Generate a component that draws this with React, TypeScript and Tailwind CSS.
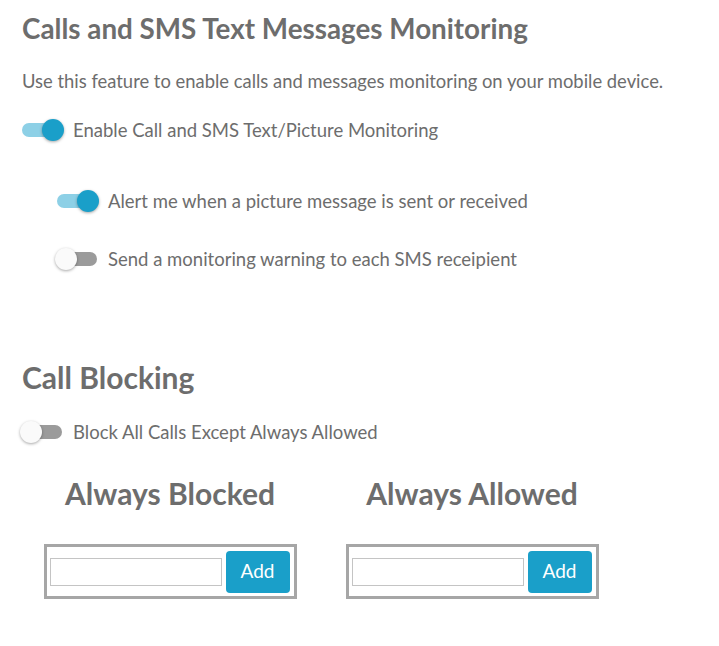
import { useState } from 'react';

const Toggle = ({ on, onChange }: { on: boolean; onChange: () => void }) => (
    <button onClick={onChange} className="relative w-[42px] h-[24px] shrink-0">
        <span className={`absolute left-0 right-[2px] top-[5px] h-[14px] rounded-full ${on ? 'bg-[#8dd0e6]' : 'bg-[#9b9b9b]'}`} />
        <span
            className={`absolute top-[1px] w-[22px] h-[22px] rounded-full shadow-[0_1px_3px_rgba(0,0,0,0.35)] ${on ? 'right-0 bg-[#1a9fc9]' : 'left-[-2px] bg-[#fafafa]'}`}
        />
    </button>
);

const ListBox = ({ title }: { title: string }) => (
    <div className="w-[302px] flex flex-col items-center">
        <h3 className="text-[30px] font-bold leading-none">{title}</h3>
        <div className="mt-[36px] w-[253px] h-[55px] border-[3px] border-[#a6a6a6] flex items-center pl-[3px] pr-[4px] gap-[4px]">
            <input className="w-[172px] h-[28px] border border-[#c4c4c4] outline-none px-1 text-[15px]" />
            <button className="w-[64px] h-[42px] rounded-[4px] bg-[#1a9fc9] text-white text-[19px]">Add</button>
        </div>
    </div>
);

const App = () => {
    const [monitor, setMonitor] = useState(true);
    const [alertPic, setAlertPic] = useState(true);
    const [warn, setWarn] = useState(false);
    const [block, setBlock] = useState(false);

    return (
        <div className="min-h-screen bg-white font-['Lato',sans-serif] text-[#6d6d6d] pt-[15px]">
            <div className="pl-[22px]">
                <h1 className="text-[27.8px] font-bold leading-none">Calls and SMS Text Messages Monitoring</h1>
                <p className="mt-[29px] text-[18.4px] leading-none">
                    Use this feature to enable calls and messages monitoring on your mobile device.
                </p>

                {/* Monitoring toggles */}
                <div className="mt-[28px] flex items-center gap-[9px]">
                    <Toggle on={monitor} onChange={() => setMonitor(!monitor)} />
                    <span className="text-[18.5px] leading-none">Enable Call and SMS Text/Picture Monitoring</span>
                </div>
                <div className="ml-[35px] mt-[47px] flex items-center gap-[9px]">
                    <Toggle on={alertPic} onChange={() => setAlertPic(!alertPic)} />
                    <span className="text-[18.5px] leading-none">Alert me when a picture message is sent or received</span>
                </div>
                <div className="ml-[35px] mt-[34px] flex items-center gap-[9px]">
                    <Toggle on={warn} onChange={() => setWarn(!warn)} />
                    <span className="text-[18.5px] leading-none">Send a monitoring warning to each SMS receipient</span>
                </div>

                {/* Call blocking */}
                <h2 className="mt-[91px] text-[30px] font-bold leading-none">Call Blocking</h2>
                <div className="mt-[28px] flex items-center gap-[9px]">
                    <Toggle on={block} onChange={() => setBlock(!block)} />
                    <span className="text-[18.5px] leading-none">Block All Calls Except Always Allowed</span>
                </div>
            </div>

            <div className="mt-[34px] ml-[19px] flex">
                <ListBox title="Always Blocked" />
                <ListBox title="Always Allowed" />
            </div>
        </div>
    );
};

export default App;
